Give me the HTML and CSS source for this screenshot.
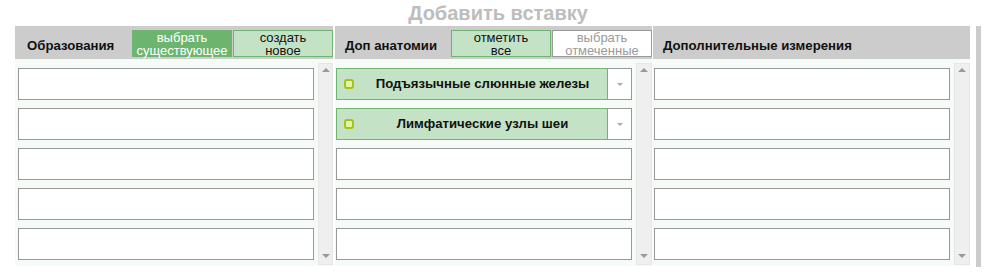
FILE: index.html
```html
<!DOCTYPE html>
<html lang="ru">
<head>
<meta charset="utf-8">
<link rel="stylesheet" href="styles.css">
</head>
<body>
<div class="page">
  <div class="title">Добавить вставку</div>
  <div class="board">
    <div class="col col1">
      <div class="head">
        <span class="head-title">Образования</span>
        <span class="btns">
          <span class="btn btn-dark">выбрать<br>существующее</span>
          <span class="btn btn-light">создать<br>новое</span>
        </span>
      </div>
      <div class="body">
        <div class="list">
          <div class="box"></div>
          <div class="box"></div>
          <div class="box"></div>
          <div class="box"></div>
          <div class="box"></div>
        </div>
        <div class="scroll"><span class="arr up"></span><span class="arr down"></span></div>
      </div>
    </div>
    <div class="col col2">
      <div class="head">
        <span class="head-title">Доп анатомии</span>
        <span class="btns">
          <span class="btn btn-light">отметить<br>все</span>
          <span class="btn btn-white">выбрать<br>отмеченные</span>
        </span>
      </div>
      <div class="body">
        <div class="list">
          <div class="item">
            <div class="item-main"><span class="dot"></span><span class="item-text">Подъязычные слюнные железы</span></div>
            <div class="item-drop"><span class="arr down"></span></div>
          </div>
          <div class="item">
            <div class="item-main"><span class="dot"></span><span class="item-text">Лимфатические узлы шеи</span></div>
            <div class="item-drop"><span class="arr down"></span></div>
          </div>
          <div class="box"></div>
          <div class="box"></div>
          <div class="box"></div>
        </div>
        <div class="scroll"><span class="arr up"></span><span class="arr down"></span></div>
      </div>
    </div>
    <div class="col col3">
      <div class="head">
        <span class="head-title">Дополнительные измерения</span>
      </div>
      <div class="body">
        <div class="list">
          <div class="box"></div>
          <div class="box"></div>
          <div class="box"></div>
          <div class="box"></div>
          <div class="box"></div>
        </div>
        <div class="scroll"><span class="arr up"></span><span class="arr down"></span></div>
      </div>
    </div>
    <div class="vbar"></div>
  </div>
</div>
</body>
</html>
```
FILE: styles.css
```css
* { box-sizing: border-box; }
html, body { margin: 0; padding: 0; background: #fff; }
body { font-family: "Liberation Sans", Arial, sans-serif; color: #111; }
.page { width: 1000px; height: 275px; padding-left: 15px; }
.title {
  width: 966px;
  height: 26px;
  line-height: 26px;
  text-align: center;
  font-size: 20px;
  font-weight: bold;
  color: #bdbdbd;
}
.board { display: flex; align-items: flex-start; }
.col { display: flex; flex-direction: column; }
.col1 { width: 318px; }
.col2 { width: 317px; margin-left: 2px; }
.col3 { width: 317px; margin-left: 1px; }
.head {
  height: 33px;
  background: #cccccc;
  display: flex;
  align-items: center;
  justify-content: space-between;
}
.col1 .head-title { padding-left: 12px; }
.col2 .head-title, .col3 .head-title { padding-left: 10px; }
.head-title { font-size: 13.2px; font-weight: bold; color: #111; padding-top: 5px; }
.btns { display: flex; align-self: flex-start; margin-top: 4px; }
.btn {
  width: 100px;
  height: 27px;
  font-size: 13px;
  line-height: 13px;
  text-align: center;
  padding-top: 0;
  border: 1px solid #6db56f;
  white-space: nowrap;
}
.btn-dark { background: #6db56f; color: #fff; }
.btn-light { background: #c4e3c6; color: #111; margin-left: 1px; }
.col2 .btn-light { margin-left: 0; }
.btn-white { background: #fff; color: #9a9a9a; border-color: #9a9a9a; margin-left: 1px; }
.body {
  height: 207px;
  background: #f7fbf8;
  display: flex;
  align-items: flex-start;
}
.col1 .body { padding-left: 3px; }
.col2 .body, .col3 .body { padding-left: 1px; }
.list {
  width: 296px;
  padding-top: 9px;
  display: flex;
  flex-direction: column;
  gap: 8px;
}
.box { height: 32px; background: #fff; border: 1px solid #999; }
.scroll {
  margin-left: 4px;
  margin-top: 4px;
  flex: 1;
  height: 202px;
  background: #efefef;
  border: 1px solid #e6e6e6;
  position: relative;
}
.arr { display: block; width: 0; height: 0; border-left: 4px solid transparent; border-right: 4px solid transparent; }
.arr.up { border-bottom: 4px solid #999; }
.arr.down { border-top: 4px solid #999; }
.scroll .arr { position: absolute; left: 3px; }
.scroll .arr.up { top: 4px; }
.scroll .arr.down { bottom: 6px; }
.item { height: 32px; display: flex; }
.item-main {
  width: 272px;
  background: #c4e3c6;
  border: 1px solid #6db56f;
  display: flex;
  align-items: center;
  padding-left: 7px;
}
.dot {
  width: 10px;
  height: 10px;
  border: 2px solid #a0c41a;
  background: #e9f3a6;
  border-radius: 3px;
  flex: none;
}
.item-text { flex: 1; text-align: center; font-size: 13.2px; font-weight: bold; color: #111; padding-left: 4px; margin-top: -2px; }
.item-drop {
  width: 24px;
  background: #fff;
  border: 1px solid #999;
  border-left: none;
  display: flex;
  align-items: center;
  justify-content: center;
}
.item-drop .arr.down { border-left-width: 3px; border-right-width: 3px; border-top: 3px solid #aaa; }
.vbar { width: 5px; height: 241px; background: #cccccc; margin-left: 6px; }
```
